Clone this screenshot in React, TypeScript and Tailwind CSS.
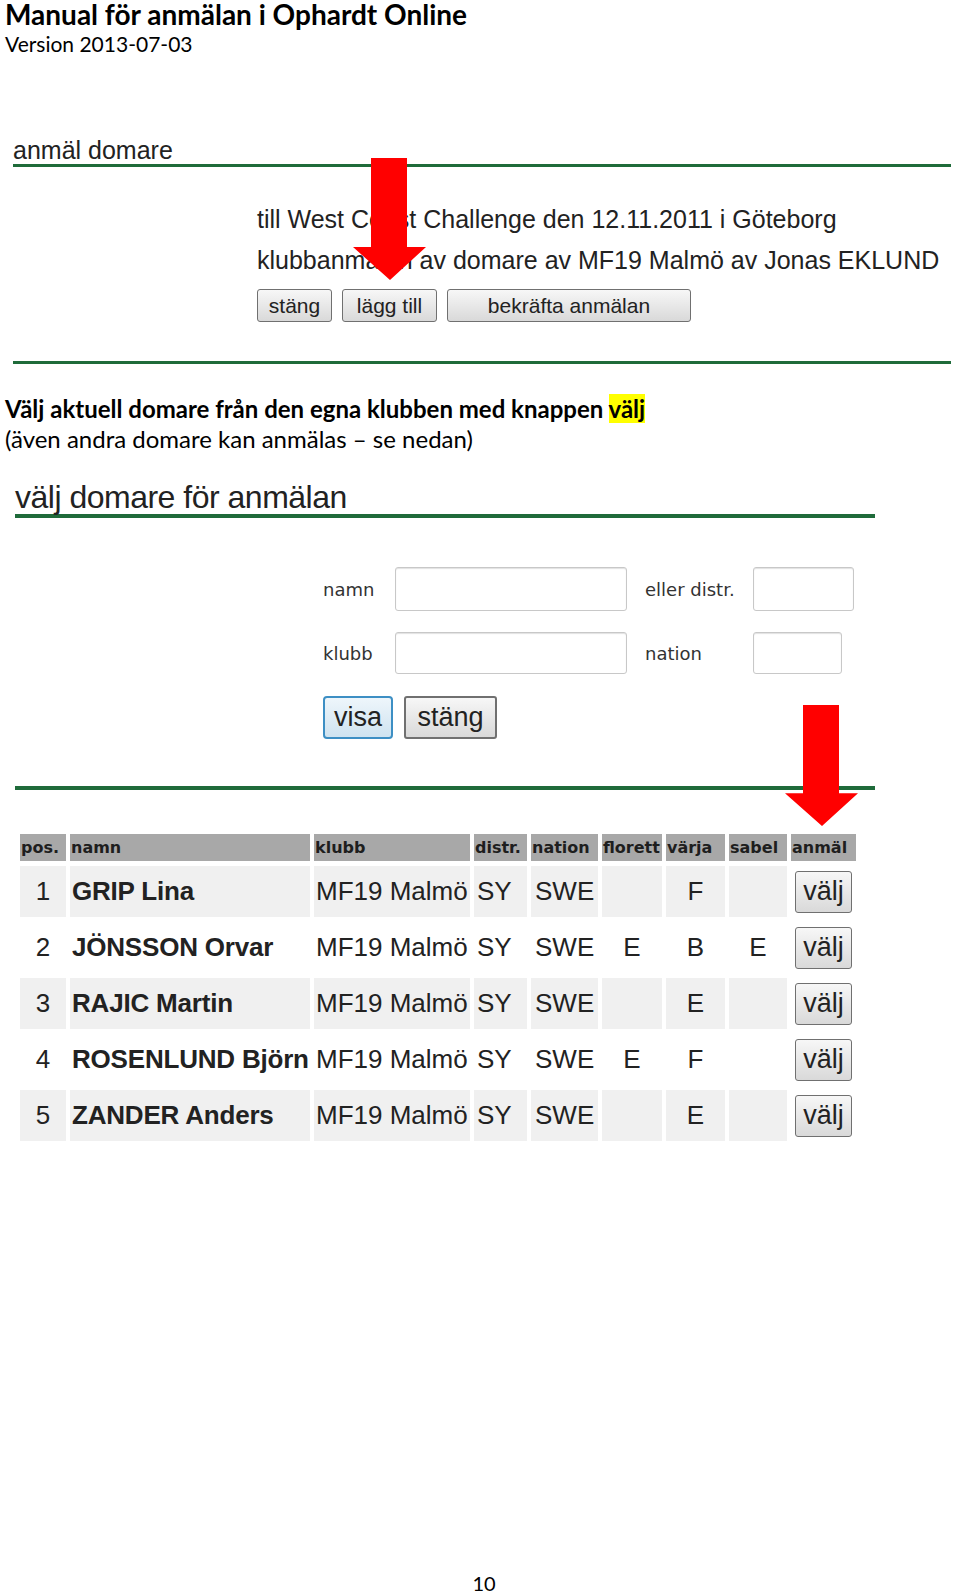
import React from "react";

const calibri = "font-['Lato','Noto_Sans',sans-serif]";
const arial = "font-['Liberation_Sans',Arial,sans-serif]";
const tahoma = "font-['DejaVu_Sans',Verdana,sans-serif]";

const referees = [
  { pos: 1, name: "GRIP Lina", club: "MF19 Malmö", distr: "SY", nation: "SWE", florett: "", varja: "F", sabel: "" },
  { pos: 2, name: "JÖNSSON Orvar", club: "MF19 Malmö", distr: "SY", nation: "SWE", florett: "E", varja: "B", sabel: "E" },
  { pos: 3, name: "RAJIC Martin", club: "MF19 Malmö", distr: "SY", nation: "SWE", florett: "", varja: "E", sabel: "" },
  { pos: 4, name: "ROSENLUND Björn", club: "MF19 Malmö", distr: "SY", nation: "SWE", florett: "E", varja: "F", sabel: "" },
  { pos: 5, name: "ZANDER Anders", club: "MF19 Malmö", distr: "SY", nation: "SWE", florett: "", varja: "E", sabel: "" },
];

const headers = ["pos.", "namn", "klubb", "distr.", "nation", "florett", "värja", "sabel", "anmäl"];

const btn =
  "h-full rounded-[3px] border border-[#707070] bg-gradient-to-b from-[#f7f7f7] to-[#d9d9d9] text-[#222] leading-none flex items-center justify-center";

// red arrow pointing down, drawn over the screenshot
function Arrow({ className }: { className: string }) {
  return (
    <svg className={className} viewBox="0 0 73 122" preserveAspectRatio="none">
      <polygon points="18,0 54,0 54,89 73,89 37,122 0,89 18,89" fill="#ff0000" />
    </svg>
  );
}

export default function App() {
  return (
    <div className="relative w-[960px] h-[1594px] bg-white flex flex-col text-black">
      {/* page header */}
      <div className={`${calibri} px-[5px]`}>
        <div className="text-[28px] leading-[28px] font-bold">Manual för anmälan i Ophardt Online</div>
        <div className="text-[21px] leading-[26px] mt-[3px]">Version 2013-07-03</div>
      </div>

      {/* screenshot 1 */}
      <div className={`${arial} ml-[13px] w-[938px] mt-[80px]`}>
        <div className="text-[25px] leading-[26px] text-[#222]">anmäl domare</div>
        <div className="h-[3px] bg-[#1f6b3a] mt-[1px]"></div>

        <div className="ml-[244px] mt-[38px] text-[25px] leading-[28px] text-[#222]">
          <div>till West Coast Challenge den 12.11.2011 i Göteborg</div>
          <div className="mt-[13px]">klubbanmälan av domare av MF19 Malmö av Jonas EKLUND</div>
          <div className="flex gap-[10px] h-[33px] mt-[15px] text-[21px]">
            <button className={`${btn} w-[75px]`}>stäng</button>
            <button className={`${btn} w-[95px]`}>lägg till</button>
            <button className={`${btn} w-[244px]`}>bekräfta anmälan</button>
          </div>
        </div>

        <div className="h-[3px] bg-[#1f6b3a] mt-[39px]"></div>
      </div>

      {/* instruction */}
      <div className={`${calibri} px-[5px] mt-[30px] text-[24px] leading-[30px]`}>
        <div className="font-bold">
          Välj aktuell domare från den egna klubben med knappen{" "}
          <span className="bg-[#ffff00]">välj</span>
        </div>
        <div>(även andra domare kan anmälas – se nedan)</div>
      </div>

      {/* screenshot 2 */}
      <div className={`${arial} ml-[15px] w-[860px] mt-[26px]`}>
        <div className="text-[32px] leading-[34px] tracking-[-0.5px] text-[#222]">välj domare för anmälan</div>
        <div className="h-[4px] bg-[#1f6b3a]"></div>

        <div className="ml-[308px] mt-[49px]">
          <div className={`${tahoma} text-[18px] text-[#333] grid grid-cols-[72px_232px_126px_auto] items-center gap-y-[21px]`}>
            <span>namn</span>
            <div className="h-[44px] rounded-[3px] border border-[#c8c8c8] shadow-[inset_0_1px_1px_rgba(0,0,0,0.12)]"></div>
            <span className="pl-[18px]">eller distr.</span>
            <div className="h-[44px] w-[101px] rounded-[3px] border border-[#c8c8c8] shadow-[inset_0_1px_1px_rgba(0,0,0,0.12)]"></div>
            <span>klubb</span>
            <div className="h-[42px] rounded-[3px] border border-[#c8c8c8] shadow-[inset_0_1px_1px_rgba(0,0,0,0.12)]"></div>
            <span className="pl-[18px]">nation</span>
            <div className="h-[42px] w-[89px] rounded-[3px] border border-[#c8c8c8] shadow-[inset_0_1px_1px_rgba(0,0,0,0.12)]"></div>
          </div>
          <div className="flex gap-[11px] h-[43px] mt-[22px] text-[27px]">
            <button className="w-[70px] h-full rounded-[4px] border-2 border-[#3d8fc4] bg-gradient-to-b from-[#eef6fb] to-[#cfe3f0] text-[#222] leading-none flex items-center justify-center">
              visa
            </button>
            <button className={`${btn} w-[93px] border-2`}>stäng</button>
          </div>
        </div>

        <div className="h-[4px] bg-[#1f6b3a] mt-[47px]"></div>
      </div>

      {/* results table */}
      <div className="ml-[20px] mt-[44px] grid grid-cols-[46px_240px_156px_53px_67px_60px_59px_58px_65px] gap-x-[4px] gap-y-[5px]">
        {headers.map((h) => (
          <div
            key={h}
            className={`${tahoma} h-[27px] bg-[#a8a8a8] text-[16px] font-bold text-[#1e1e1e] leading-[27px] pl-[1px] whitespace-nowrap overflow-hidden`}
          >
            {h}
          </div>
        ))}
        {referees.map((r) => {
          const bg = r.pos % 2 === 1 ? "bg-[#f0f0f0]" : "bg-white";
          const cell = `${arial} ${bg} h-[51px] flex items-center text-[26px] text-[#222]`;
          return (
            <React.Fragment key={r.pos}>
              <div className={`${cell} justify-center`}>{r.pos}</div>
              <div className={`${cell} font-bold pl-[2px] whitespace-nowrap tracking-[-0.2px]`}>{r.name}</div>
              <div className={`${cell} pl-[2px]`}>{r.club}</div>
              <div className={`${cell} pl-[3px]`}>{r.distr}</div>
              <div className={`${cell} pl-[4px]`}>{r.nation}</div>
              <div className={`${cell} justify-center`}>{r.florett}</div>
              <div className={`${cell} justify-center`}>{r.varja}</div>
              <div className={`${cell} justify-center`}>{r.sabel}</div>
              <div className={`${arial} h-[51px] flex items-center justify-center`}>
                <button className={`${btn} w-[57px] !h-[42px] text-[27px] border-[#6a6a6a]`}>välj</button>
              </div>
            </React.Fragment>
          );
        })}
      </div>

      {/* page number */}
      <div className={`${calibri} mt-auto text-center text-[20px] leading-[22px] pl-[8px]`}>10</div>

      {/* arrows */}
      <Arrow className="absolute left-[353px] top-[158px] w-[73px] h-[122px]" />
      <Arrow className="absolute left-[785px] top-[705px] w-[73px] h-[121px]" />
    </div>
  );
}
